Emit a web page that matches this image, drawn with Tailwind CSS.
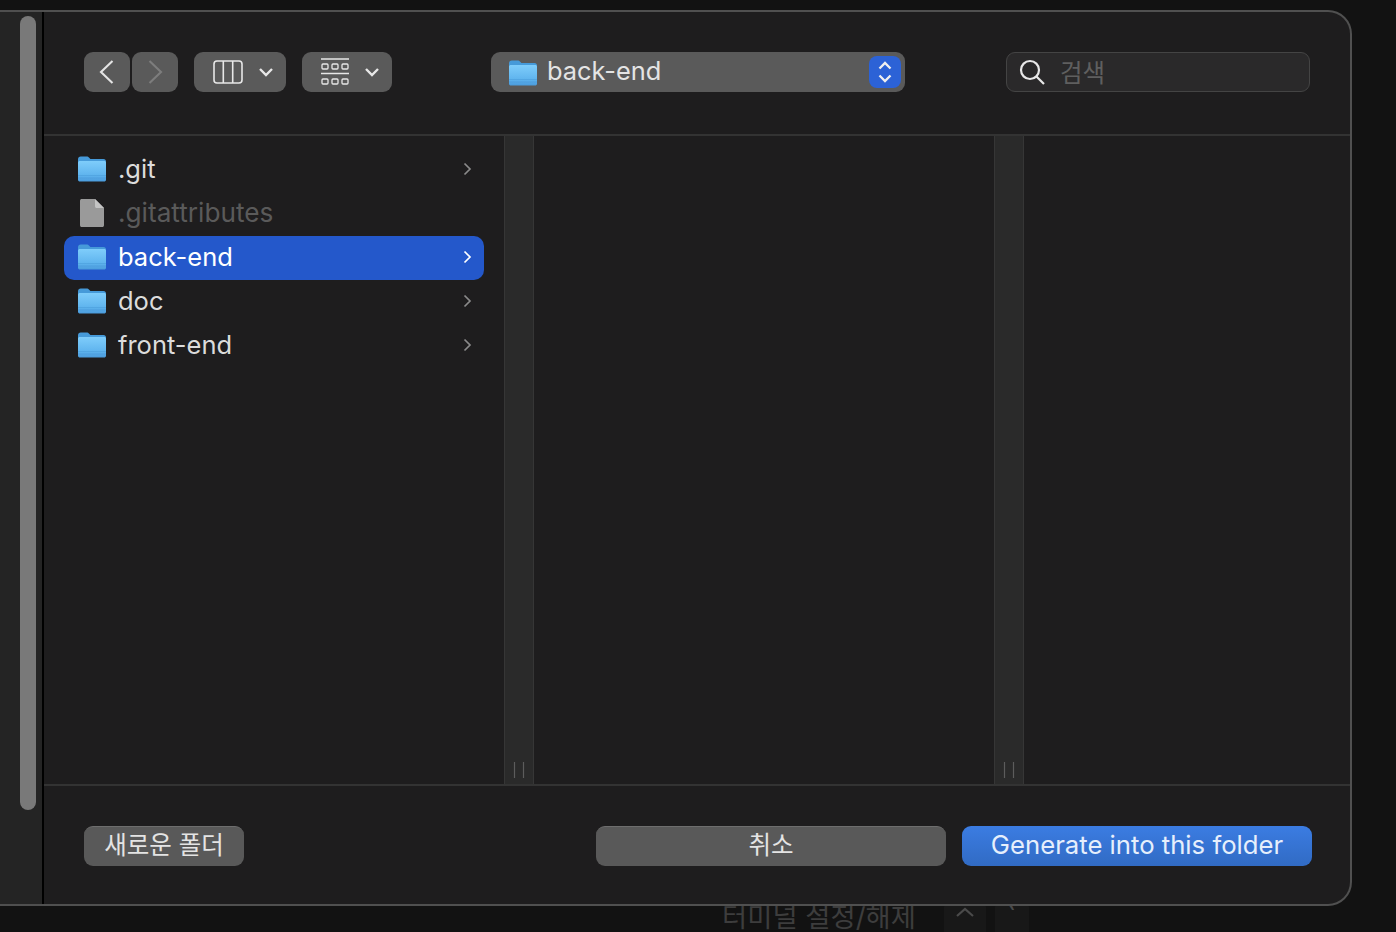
<!DOCTYPE html>
<html lang="ko">
<head>
    <meta charset="utf-8">
    <title>back-end</title>
    <script src="https://cdn.jsdelivr.net/npm/@tailwindcss/browser@4"></script>
</head>
<body class="bg-[#121212] font-['Inter','Noto_Sans_CJK_KR',sans-serif]">
    <!-- not display:none, the gradient would stop resolving -->
    <svg class="absolute w-0 h-0">
        <defs>
            <linearGradient id="folderBody" x1="0" y1="0" x2="0" y2="1">
                <stop offset="0" stop-color="#7fcdfb" />
                <stop offset="0.7" stop-color="#5fb4ee" />
                <stop offset="1" stop-color="#4a9bdc" />
            </linearGradient>
            <symbol id="folder" viewBox="0 0 30 28">
                <path d="M1 5.5C1 3.6 2 2.5 3.8 2.5H9.5C10.8 2.5 11.4 2.9 12.2 3.8L13.4 5H26.5C28.2 5 29 6 29 7.6V12H1Z" fill="#469ad9" />
                <path d="M1 8.6C1 7.4 1.8 6.9 3 6.9H27C28.2 6.9 29 7.4 29 8.6V25.5C29 26.9 28.2 27.5 27 27.5H3C1.8 27.5 1 26.9 1 25.5Z" fill="url(#folderBody)" />
                <path d="M1 21.5H29M1 24H29" stroke="#3f8fce" stroke-opacity="0.45" stroke-width="0.8" />
            </symbol>
            <symbol id="chev" viewBox="0 0 10 16">
                <path d="M2.5 2.5L8 8L2.5 13.5" fill="none" stroke="currentColor" stroke-width="1.7" />
            </symbol>
            <symbol id="drag" viewBox="0 0 12 16">
                <path d="M1.5 0V16M10.5 0V16" stroke="#5c5c5c" stroke-width="1.2" />
            </symbol>
        </defs>
    </svg>

    <div class="relative w-[1396px] h-[932px] overflow-hidden">
        <!-- terminal behind the dialog -->
        <div class="absolute left-[722px] top-[901px] flex items-start text-[27.4px] leading-[32px] text-[#3d3d3d]">
            <span>터미널 설정/해제</span>
            <div class="ml-[28px] w-[42px] h-[40px] rounded-[6px] bg-[#181818] flex justify-center pt-[6px]">
                <svg class="w-[20px] h-[10px]" viewBox="0 0 20 10"><path d="M2 9L10 2L18 9" fill="none" stroke="#4a4a4a" stroke-width="2.2" /></svg>
            </div>
            <span class="ml-[9px] w-[34px] h-[40px] rounded-[6px] bg-[#181818] text-center text-[#4a4a4a]">`</span>
        </div>

        <div class="relative mt-[10px] w-[1352px] h-[896px] flex">
            <!-- left strip with scrollbar -->
            <div class="w-[44px] shrink-0 flex flex-col bg-[#242424] border-t-2 border-b-2 border-[#4f4f4f]">
                <div class="flex-1 border-r-2 border-black pl-[20px] pt-[4px]">
                    <div class="w-[16px] h-[794px] rounded-full bg-[#797979]"></div>
                </div>
            </div>

            <div class="flex-1 flex flex-col bg-[#1e1d1e] border-t-2 border-r-2 border-b-2 border-[#505050] rounded-r-[24px]">
                <!-- toolbar -->
                <div class="h-[124px] shrink-0 flex items-center pl-[40px] pb-[2px] border-b-2 border-[#333333]">
                    <div class="flex gap-[2px]">
                        <div class="w-[46px] h-[40px] rounded-[9px] bg-[#5a5a5a] flex items-center justify-center text-[#e4e4e4]">
                            <svg class="w-[18px] h-[26px]" viewBox="0 0 18 26"><path d="M14.5 2L3 13L14.5 24" fill="none" stroke="currentColor" stroke-width="2.1" /></svg>
                        </div>
                        <div class="w-[46px] h-[40px] rounded-[9px] bg-[#5a5a5a] flex items-center justify-center text-[#7d7d7d]">
                            <svg class="w-[18px] h-[26px]" viewBox="0 0 18 26"><path d="M3.5 2L15 13L3.5 24" fill="none" stroke="currentColor" stroke-width="2.1" /></svg>
                        </div>
                    </div>
                    <div class="ml-[16px] w-[92px] h-[40px] rounded-[9px] bg-[#5a5a5a] flex items-center pl-[19px] text-[#e8e8e8]">
                        <svg class="w-[30px] h-[24px]" viewBox="0 0 30 24" fill="none" stroke="currentColor" stroke-width="1.6"><rect x="1" y="1" width="28" height="22" rx="3" /><path d="M10.3 1V23M19.7 1V23" /></svg>
                        <svg class="ml-[15px] w-[16px] h-[12px]" viewBox="0 0 16 12"><path d="M2 3L8 9L14 3" fill="none" stroke="currentColor" stroke-width="2.4" /></svg>
                    </div>
                    <div class="ml-[16px] w-[90px] h-[40px] rounded-[9px] bg-[#5a5a5a] flex items-center pl-[19px] text-[#e8e8e8]">
                        <svg class="w-[28px] h-[28px]" viewBox="0 0 28 28" fill="none" stroke="currentColor" stroke-width="1.3"><path d="M0 1H28M0 15.5H28" /><rect x="1" y="6" width="6" height="5" rx="1" /><rect x="11" y="6" width="6" height="5" rx="1" /><rect x="21" y="6" width="6" height="5" rx="1" /><rect x="1" y="21" width="6" height="5" rx="1" /><rect x="11" y="21" width="6" height="5" rx="1" /><rect x="21" y="21" width="6" height="5" rx="1" /></svg>
                        <svg class="ml-[15px] w-[16px] h-[12px]" viewBox="0 0 16 12"><path d="M2 3L8 9L14 3" fill="none" stroke="currentColor" stroke-width="2.4" /></svg>
                    </div>
                    <div class="ml-[99px] w-[414px] h-[40px] rounded-[9px] bg-[#5a5a5a] flex items-center pl-[17px] pr-[4px] text-[#e4e4e4]">
                        <svg class="w-[30px] h-[28px]"><use href="#folder" /></svg>
                        <span class="ml-[9px] mb-[2px] text-[25.4px] leading-[32px] flex-1">back-end</span>
                        <div class="w-[32px] h-[32px] rounded-[8px] bg-[#2c62d6] flex items-center justify-center text-[#f0f0f0]">
                            <svg class="w-[16px] h-[26px]" viewBox="0 0 16 26" fill="none" stroke="currentColor" stroke-width="2.3"><path d="M2.5 9.5L8 4L13.5 9.5M2.5 16.5L8 22L13.5 16.5" /></svg>
                        </div>
                    </div>
                    <div class="ml-[101px] w-[304px] h-[40px] rounded-[9px] bg-[#2a292a] border border-[#444444] flex items-center pl-[12px] text-[#5f5f5f]">
                        <svg class="w-[27px] h-[27px] text-[#e8e8e8]" viewBox="0 0 27 27" fill="none" stroke="currentColor" stroke-width="2.2"><circle cx="11" cy="11" r="9" /><path d="M17.5 17.5L25 25" /></svg>
                        <span class="ml-[14px] mt-[2px] text-[24.5px] leading-[32px]">검색</span>
                    </div>
                </div>

                <!-- column browser -->
                <div class="flex-1 flex border-b-2 border-[#333333]">
                    <div class="w-[460px] shrink-0 pt-[12px] pl-[20px] text-[25.5px] text-[#dcdcdc]">
                        <div class="w-[420px] h-[44px] flex items-center pl-[13px] pr-[12px] rounded-[10px]">
                            <svg class="w-[30px] h-[28px] mb-[4px]"><use href="#folder" /></svg>
                            <span class="ml-[11px] mb-[2px] flex-1">.git</span>
                            <svg class="w-[10px] h-[16px] mb-[2px] text-[#8a8a8a]"><use href="#chev" /></svg>
                        </div>
                        <div class="w-[420px] h-[44px] flex items-center pl-[13px] pr-[12px] rounded-[10px]">
                            <svg class="w-[30px] h-[30px] mb-[2px]" viewBox="0 0 30 30"><path d="M3 3C3 1.6 3.6 1 5 1H18L27 10V27C27 28.4 26.4 29 25 29H5C3.6 29 3 28.4 3 27Z" fill="#9a9a9a" /><path d="M18 1L27 10H20C18.6 10 18 9.4 18 8Z" fill="#c4c4c4" /></svg>
                            <span class="ml-[11px] mb-[2px] flex-1 text-[26.2px] text-[#5a5a5a]">.gitattributes</span>
                        </div>
                        <div class="w-[420px] h-[44px] flex items-center pl-[13px] pr-[12px] rounded-[10px] bg-[#2458cb] text-white">
                            <svg class="w-[30px] h-[28px] mb-[4px]"><use href="#folder" /></svg>
                            <span class="ml-[11px] mb-[2px] flex-1">back-end</span>
                            <svg class="w-[10px] h-[16px] mb-[2px]"><use href="#chev" /></svg>
                        </div>
                        <div class="w-[420px] h-[44px] flex items-center pl-[13px] pr-[12px] rounded-[10px]">
                            <svg class="w-[30px] h-[28px] mb-[4px]"><use href="#folder" /></svg>
                            <span class="ml-[11px] mb-[2px] flex-1">doc</span>
                            <svg class="w-[10px] h-[16px] mb-[2px] text-[#8a8a8a]"><use href="#chev" /></svg>
                        </div>
                        <div class="w-[420px] h-[44px] flex items-center pl-[13px] pr-[12px] rounded-[10px]">
                            <svg class="w-[30px] h-[28px] mb-[4px]"><use href="#folder" /></svg>
                            <span class="ml-[11px] mb-[2px] flex-1">front-end</span>
                            <svg class="w-[10px] h-[16px] mb-[2px] text-[#8a8a8a]"><use href="#chev" /></svg>
                        </div>
                    </div>
                    <div class="w-[30px] shrink-0 bg-[#2a2a2a] border-x border-[#363636] flex items-end justify-center pb-[6px]">
                        <svg class="w-[12px] h-[16px]"><use href="#drag" /></svg>
                    </div>
                    <div class="w-[460px] shrink-0"></div>
                    <div class="w-[30px] shrink-0 bg-[#2a2a2a] border-x border-[#363636] flex items-end justify-center pb-[6px]">
                        <svg class="w-[12px] h-[16px]"><use href="#drag" /></svg>
                    </div>
                    <div class="flex-1"></div>
                </div>

                <!-- footer -->
                <div class="h-[118px] shrink-0 flex items-start pt-[40px] pl-[40px] text-[24.5px] leading-[36px]">
                    <div class="w-[160px] h-[40px] rounded-[9px] bg-[#595959] border-t border-[#6e6e6e] text-[#e4e4e4] text-center">새로운 폴더</div>
                    <div class="ml-[352px] w-[350px] h-[40px] rounded-[9px] bg-[#595959] border-t border-[#6e6e6e] text-[#e4e4e4] text-center">취소</div>
                    <div class="ml-[16px] w-[350px] h-[40px] rounded-[9px] bg-gradient-to-b from-[#3b7ce2] to-[#316bc4] text-[25.7px] leading-[38px] text-[#e6effc] text-center">Generate into this folder</div>
                </div>
            </div>
        </div>
    </div>
</body>
</html>
